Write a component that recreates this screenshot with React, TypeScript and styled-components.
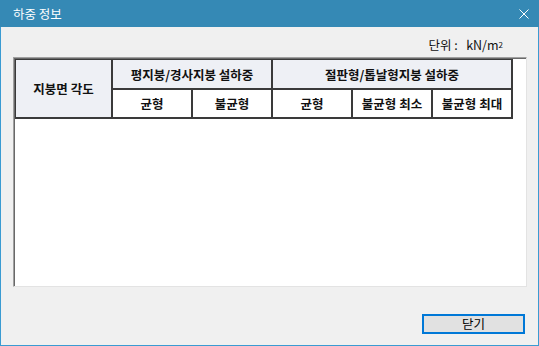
import styled, { createGlobalStyle } from "styled-components";

const GlobalStyle = createGlobalStyle`
  html, body {
    margin: 0;
    padding: 0;
    background: #f0f0f0;
  }
  body {
    font-family: "Noto Sans CJK KR", "Noto Sans", sans-serif;
  }
`;

const Window = styled.div`
  width: 539px;
  height: 346px;
  box-sizing: border-box;
  display: flex;
  flex-direction: column;
  background: #f0f0f0;
  border: 1px solid #3a9bd2;
  border-top: none;
`;

const TitleBar = styled.div`
  height: 27px;
  flex-shrink: 0;
  display: flex;
  align-items: center;
  justify-content: space-between;
  background: #3589b5;
  padding: 0 10px 0 13px;
  margin: 0 -1px;
  color: #ffffff;
  font-size: 12.5px;
`;

const CloseIcon = styled.svg`
  width: 10px;
  height: 10px;
  display: block;
`;

const Body = styled.div`
  flex: 1;
  display: flex;
  flex-direction: column;
  padding: 0 11px 0 12px;
`;

const UnitRow = styled.div`
  height: 30px;
  box-sizing: border-box;
  display: flex;
  justify-content: flex-end;
  align-items: flex-end;
  padding: 0 24px 4px 0;
  font-size: 12.5px;
  line-height: 16px;
  color: #111;
  white-space: pre;
`;

const Sup = styled.span`
  font-size: 8px;
  vertical-align: 4px;
`;

const Panel = styled.div`
  height: 230px;
  box-sizing: border-box;
  background: #ffffff;
  border-top: 1px solid #a0a0a0;
  border-left: 1px solid #a0a0a0;
  border-right: 1px solid #e3e3e3;
  border-bottom: 1px solid #e3e3e3;
  box-shadow: inset 1px 1px 0 #696969;
  padding: 1px 0 0 1px;
`;

const HeaderGrid = styled.div`
  display: grid;
  grid-template-columns: 95px repeat(5, 78px);
  grid-template-rows: 28px 27px;
  gap: 2px;
  width: max-content;
  background: #3a3a3a;
  padding: 1px 2px 2px 1px;
`;

const HeadCell = styled.div<{ $tint?: boolean; $col?: string; $row?: string }>`
  display: flex;
  align-items: center;
  justify-content: center;
  background: ${(p) => (p.$tint ? "#eef0f5" : "#ffffff")};
  grid-column: ${(p) => p.$col || "auto"};
  grid-row: ${(p) => p.$row || "auto"};
  font-size: 12.5px;
  font-weight: 700;
  color: #111;
  white-space: nowrap;
`;

const Footer = styled.div`
  display: flex;
  justify-content: flex-end;
  padding: 27px 2px 0 0;
`;

const CloseButton = styled.button`
  width: 103px;
  height: 20px;
  box-sizing: border-box;
  border: 2px solid #0078d7;
  background: #e1e1e1;
  padding: 0;
  font-family: "Noto Sans CJK KR", "Noto Sans", sans-serif;
  font-size: 12.5px;
  line-height: 14px;
  color: #000;
`;

const App = () => {
  return (
    <>
      <GlobalStyle />
      <Window>
        <TitleBar>
          <span>하중 정보</span>
          <CloseIcon viewBox="0 0 10 10">
            <path d="M0.5 0.5 L9.5 9.5 M9.5 0.5 L0.5 9.5" stroke="#ffffff" strokeWidth="1" fill="none" />
          </CloseIcon>
        </TitleBar>
        <Body>
          <UnitRow>
            단위 :   kN/m<Sup>2</Sup>
          </UnitRow>
          <Panel>
            <HeaderGrid>
              <HeadCell $tint $row="1 / 3">지붕면 각도</HeadCell>
              <HeadCell $tint $col="2 / 4">평지붕/경사지붕 설하중</HeadCell>
              <HeadCell $tint $col="4 / 7">절판형/톱날형지붕 설하중</HeadCell>
              <HeadCell>균형</HeadCell>
              <HeadCell>불균형</HeadCell>
              <HeadCell>균형</HeadCell>
              <HeadCell>불균형 최소</HeadCell>
              <HeadCell>불균형 최대</HeadCell>
            </HeaderGrid>
          </Panel>
          <Footer>
            <CloseButton>닫기</CloseButton>
          </Footer>
        </Body>
      </Window>
    </>
  );
};

export default App;
